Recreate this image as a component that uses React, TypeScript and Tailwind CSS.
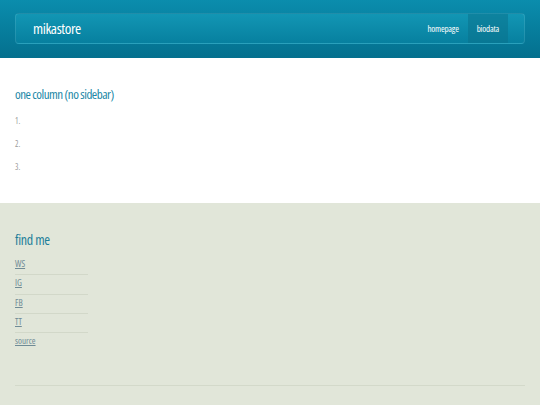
const links = ["WS", "IG", "FB", "TT", "source"];

export default function App() {
  return (
    <div className="min-h-[405px] w-full bg-white font-['Open_Sans',sans-serif] font-stretch-condensed">
      <header className="h-[58px] bg-gradient-to-b from-[#0b8dad] to-[#04708e] px-[15px] pt-[13px]">
        <div className="flex h-[31px] items-stretch justify-between rounded-[4px] border border-white/10 bg-gradient-to-b from-[#1296b4] to-[#07809f] pl-[17px] pr-[16px]">
          <div className="flex items-center text-[15px] tracking-[-0.4px] text-white">mikastore</div>
          <nav className="flex items-stretch text-[9px] tracking-[-0.2px] text-white">
            <a className="flex items-center px-[9px]">homepage</a>
            <a className="flex items-center bg-[#0a6f8a]/50 px-[9px]">biodata</a>
          </nav>
        </div>
      </header>

      <main className="h-[145px] px-[15px] pt-[28px]">
        <h2 className="text-[13px] leading-[16px] tracking-[-0.5px] text-[#1b87a6]">one column (no sidebar)</h2>
        <ol className="mt-[15px] flex flex-col gap-[15px] text-[8px] leading-[8px] text-[#9a9a9a]">
          <li>1.</li>
          <li>2.</li>
          <li>3.</li>
        </ol>
      </main>

      <footer className="h-[202px] bg-[#e1e6d9] px-[15px] pt-[29px]">
        <h3 className="text-[14px] leading-[16px] tracking-[-0.3px] text-[#1f7f9a]">find me</h3>
        <ul className="mt-[8px] w-[73px]">
          {links.map((l, i) => (
            <li
              key={l}
              className={`h-[19.3px] pt-[3px] text-[9px] leading-[9px] text-[#6f8b96] ${i < links.length - 1 ? "border-b border-[#d2d8c9]" : ""}`}
            >
              <a className="underline">{l}</a>
            </li>
          ))}
        </ul>
        <div className="mt-[33px] border-t border-[#d3d9ca]" />
      </footer>
    </div>
  );
}
